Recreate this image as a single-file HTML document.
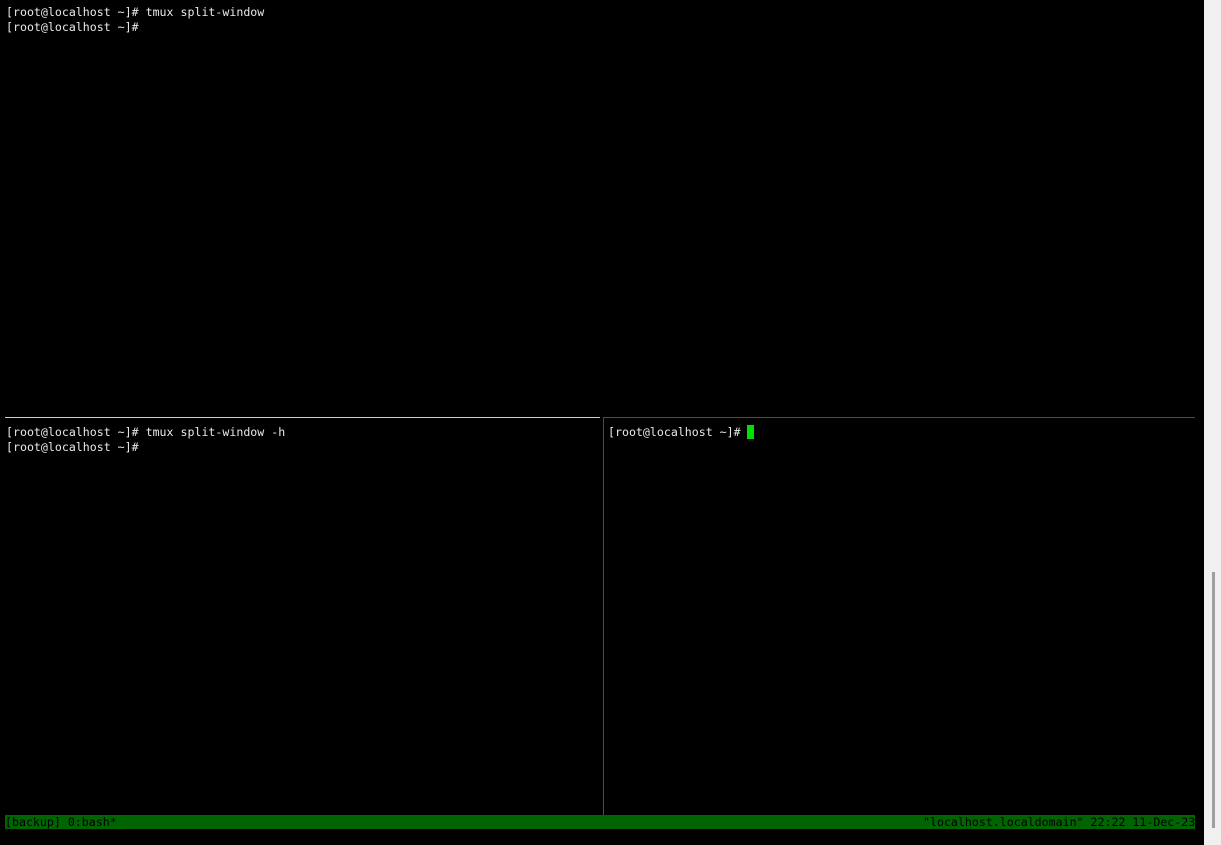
<!DOCTYPE html>
<html><head><meta charset="utf-8"><style>
html,body{margin:0;padding:0;width:1221px;height:845px;background:#000;overflow:hidden;position:relative}
.t{position:absolute;font-family:"DejaVu Sans Mono","Liberation Mono",monospace;font-size:11.6px;line-height:15px;color:#e8e8e8;white-space:pre}
.abs{position:absolute}
</style></head><body>
<div class="t" style="left:6px;top:5px">[root@localhost ~]# tmux split-window
[root@localhost ~]#</div>
<div class="abs" style="left:5px;top:417px;width:595px;height:1px;background:#d0d0d0"></div>
<div class="abs" style="left:604px;top:417px;width:591px;height:1px;background:#1f6a1f"></div>
<div class="abs" style="left:603px;top:417px;width:1px;height:398px;background:#1f6a1f"></div>
<div class="t" style="left:6px;top:425px">[root@localhost ~]# tmux split-window -h
[root@localhost ~]#</div>
<div class="t" style="left:608px;top:425px">[root@localhost ~]# </div>
<div class="abs" style="left:747px;top:425px;width:7px;height:14px;background:#00e000"></div>
<div class="abs" style="left:5px;top:815px;width:1190px;height:14px;background:#006400"></div>
<div class="t" style="left:5px;top:815px;color:#000">[backup] 0:bash*</div>
<div class="t" style="left:923px;top:815px;color:#000">"localhost.localdomain" 22:22 11-Dec-23</div>
<div class="abs" style="left:1204px;top:0;width:17px;height:845px;background:#f0f0f0"></div>
<div class="abs" style="left:1212px;top:572px;width:3px;height:256px;background:#a0a0a0"></div>
</body></html>
